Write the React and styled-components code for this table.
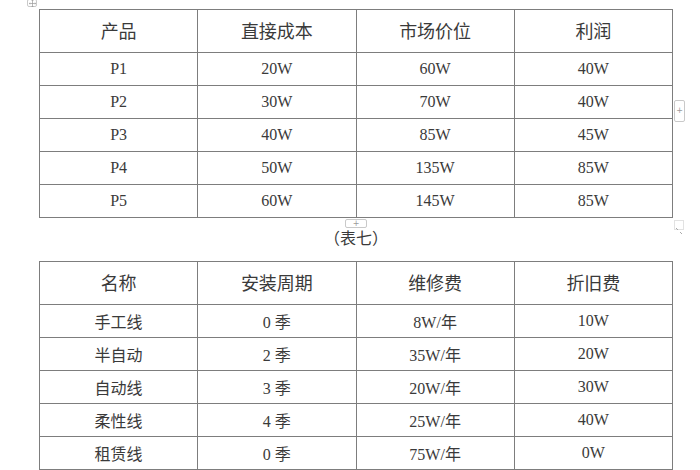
import styled, { createGlobalStyle } from "styled-components";

const GlobalStyle = createGlobalStyle`
  body {
    margin: 0;
    background: #fff;
    font-family: "Liberation Serif", "Noto Sans CJK SC", serif;
    color: #3a3a3a;
  }
`;

const Page = styled.div`
  width: 700px;
  height: 470px;
  overflow: hidden;
  padding: 9px 0 0 39px;
  box-sizing: border-box;
  display: flex;
  flex-direction: column;
`;

const TableWrap = styled.div`
  position: relative;
  width: 634px;
`;

const Table = styled.table`
  width: 634px;
  border-collapse: collapse;
  table-layout: fixed;
  & td,
  & th {
    border: 1px solid #7d7d7d;
    text-align: center;
    padding: 0;
  }
`;

const Head = styled.th`
  height: 39px;
  font-weight: normal;
  font-size: 18px;
  color: #3a3a3a;
  && {
    padding-bottom: 3px;
  }
`;

const Cell = styled.td`
  height: 32px;
  font-size: 16px;
`;

const Caption = styled.div`
  width: 634px;
  text-align: center;
  font-size: 16px;
  height: 43px;
  line-height: 42px;
`;

const Handle = styled.div`
  position: absolute;
  box-sizing: border-box;
  border: 1px solid #c9c9c9;
  border-radius: 2px;
  background: #fff;
  color: #9a9a9a;
  font-family: "DejaVu Sans", sans-serif;
  font-size: 8px;
  line-height: 8px;
  display: flex;
  align-items: center;
  justify-content: center;
`;

const MoveHandle = styled(Handle)`
  left: -12px;
  top: -10px;
  width: 10px;
  height: 8px;
`;

const BottomPlus = styled(Handle)`
  left: 306px;
  bottom: -10px;
  width: 22px;
  height: 9px;
`;

const SidePlus = styled(Handle)`
  right: -12px;
  top: 91px;
  width: 11px;
  height: 22px;
`;

const Resize = styled.div`
  position: absolute;
  right: -11px;
  bottom: -12px;
  width: 10px;
  height: 10px;
  border: 1px solid #e2e2e2;
  box-sizing: border-box;
`;

const products = [
  ["P1", "20W", "60W", "40W"],
  ["P2", "30W", "70W", "40W"],
  ["P3", "40W", "85W", "45W"],
  ["P4", "50W", "135W", "85W"],
  ["P5", "60W", "145W", "85W"],
];

const lines = [
  ["手工线", "0 季", "8W/年", "10W"],
  ["半自动", "2 季", "35W/年", "20W"],
  ["自动线", "3 季", "20W/年", "30W"],
  ["柔性线", "4 季", "25W/年", "40W"],
  ["租赁线", "0 季", "75W/年", "0W"],
];

function DataTable({ heads, rows }) {
  return (
    <Table>
      <thead>
        <tr>
          {heads.map((h) => (
            <Head key={h}>{h}</Head>
          ))}
        </tr>
      </thead>
      <tbody>
        {rows.map((r) => (
          <tr key={r[0]}>
            {r.map((c, i) => (
              <Cell key={i}>{c}</Cell>
            ))}
          </tr>
        ))}
      </tbody>
    </Table>
  );
}

export default function App() {
  return (
    <>
      <GlobalStyle />
      <Page>
        <TableWrap>
          <MoveHandle>
            <svg width="7" height="7" viewBox="0 0 8 8">
              <path d="M4 0 L4 8 M0 4 L8 4 M3 1 L4 0 L5 1 M3 7 L4 8 L5 7 M1 3 L0 4 L1 5 M7 3 L8 4 L7 5" stroke="#999" strokeWidth="0.8" fill="none" />
            </svg>
          </MoveHandle>
          <DataTable heads={["产品", "直接成本", "市场价位", "利润"]} rows={products} />
          <BottomPlus>+</BottomPlus>
          <SidePlus>+</SidePlus>
          <Resize>
            <svg width="8" height="8" viewBox="0 0 8 8">
              <path d="M1 1 L3 3 M5 5 L7 7" stroke="#aaa" strokeWidth="1" />
            </svg>
          </Resize>
        </TableWrap>
        <Caption>（表七）</Caption>
        <TableWrap>
          <DataTable heads={["名称", "安装周期", "维修费", "折旧费"]} rows={lines} />
        </TableWrap>
      </Page>
    </>
  );
}
